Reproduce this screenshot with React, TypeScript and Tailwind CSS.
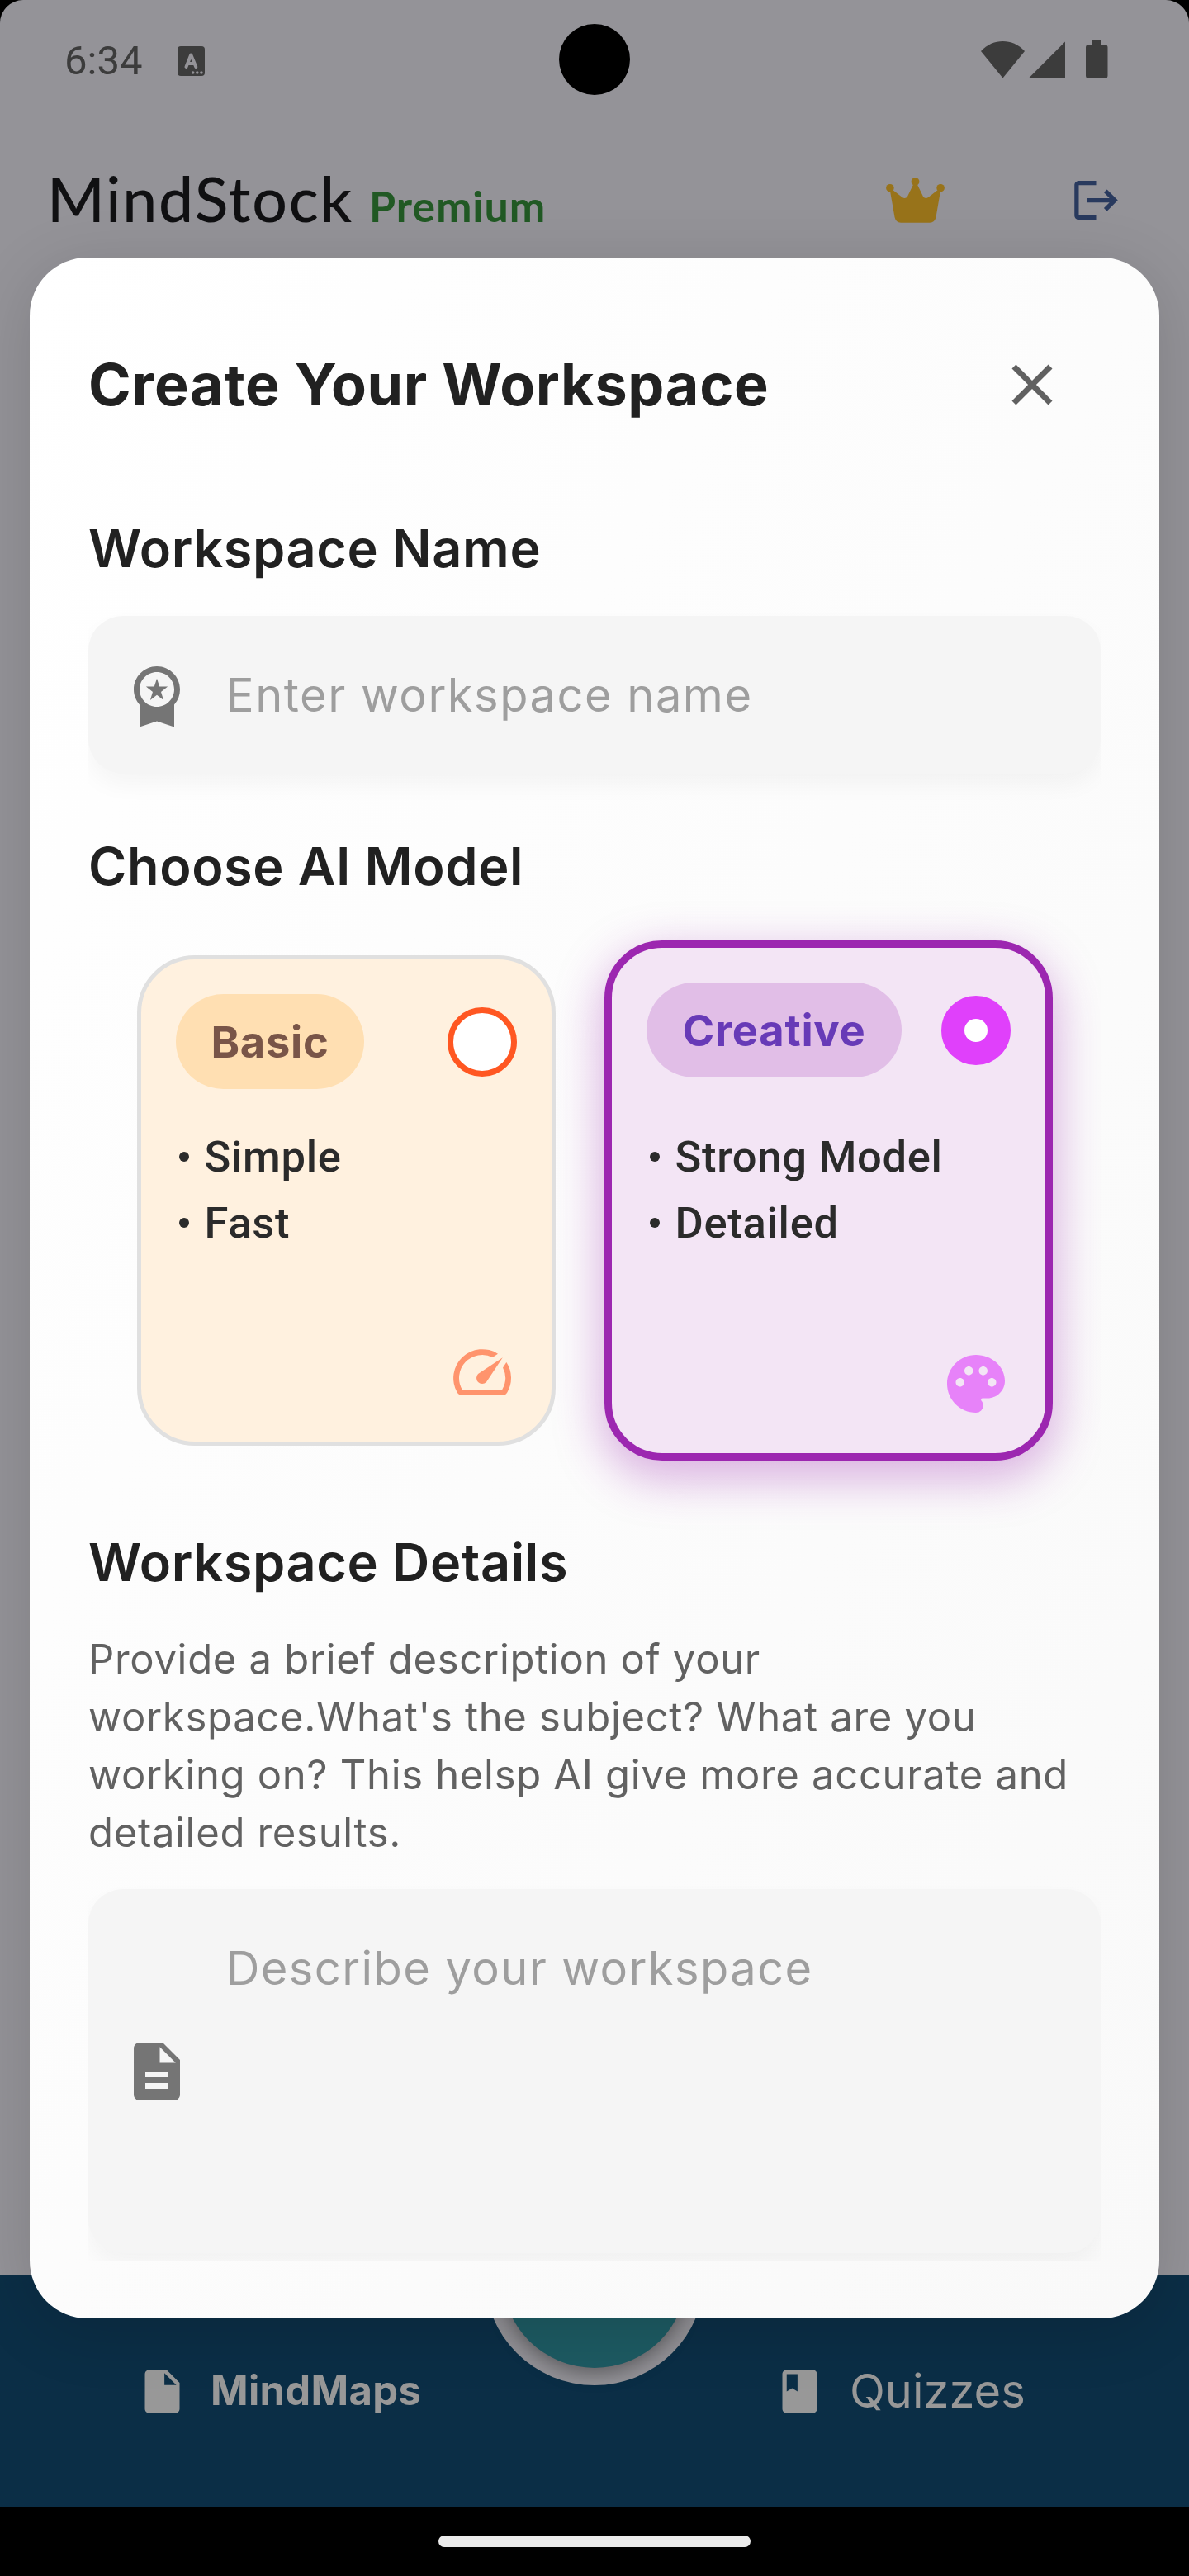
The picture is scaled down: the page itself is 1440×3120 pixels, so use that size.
import React from "react";
import {
  MdWorkspacePremium,
  MdDescription,
  MdSpeed,
  MdLogout,
  MdInsertDriveFile,
  MdBook,
  MdClose,
} from "react-icons/md";

function StatusBar() {
  return (
    <div className="relative flex h-[147px] items-center justify-between pl-[78px] pr-[98px] text-[#3c3c3c]">
      <div className="flex items-center gap-[40px]">
        <span className="w-[97px] whitespace-nowrap font-[Roboto] text-[49px] leading-[56px]">6:34</span>
        <span className="flex h-[36px] w-[33px] items-center justify-center rounded-[4px] bg-[#3c3c3c]">
          <svg viewBox="0 0 33 36" className="h-[36px] w-[33px]" fill="none">
            <path
              d="M10.5 25 L16.3 10.5 L22.3 25 M12.8 21 H20"
              stroke="#949398"
              strokeWidth="4"
              strokeLinecap="round"
              strokeLinejoin="round"
            />
            <circle cx="18.7" cy="32" r="1.8" fill="#949398" />
            <circle cx="23.8" cy="32" r="1.8" fill="#949398" />
            <circle cx="28.9" cy="32" r="1.8" fill="#949398" />
          </svg>
        </span>
      </div>
      <div className="absolute left-[677px] top-[29px] size-[86px] rounded-full bg-black" />
      <svg viewBox="0 0 154 46" className="mt-[-3px] h-[46px] w-[154px]" fill="currentColor">
        <path d="M0 13 C8 4.500 17 1 26.500 1 C36 1 45 4.500 53 13 L26.500 45.500 Z" />
        <path d="M57.500 46 L102 1.500 V46 Z" />
        <path d="M134.500 0 H146 V5 H150 Q153.500 5 153.500 8.500 V42.500 Q153.500 46 150 46 H130.500 Q127 46 127 42.500 V8.500 Q127 5 130.500 5 H134.500 Z" />
      </svg>
    </div>
  );
}

function Header() {
  return (
    <div className="flex h-[190px] items-center justify-between pl-[57px] pr-[81px]">
      <div className="mt-[-5px] flex items-baseline font-[Lato]">
        <span className="w-[390px] whitespace-nowrap text-[75px] font-medium leading-[100px] tracking-[1.800px] text-[#101012]">
          MindStock
        </span>
        <span className="whitespace-nowrap text-[52px] font-bold leading-[70px] tracking-[0.9px] text-[#215924]">
          Premium
        </span>
      </div>
      <div className="flex items-center">
        <svg viewBox="0 0 71 55" className="mr-[152px] h-[55px] w-[71px]" fill="#98731a">
          <circle cx="4.9" cy="12.700" r="4.800" />
          <circle cx="35.500" cy="4.9" r="4.900" />
          <circle cx="66.1" cy="12.700" r="4.800" />
          <path d="M5.200 17.500 L8.500 15.200 L19.800 24 Q23.500 26.500 26 23 L32.800 9 H38.200 L45 23 Q47.500 26.500 51.200 24 L62.500 15.200 L65.800 17.500 L60.500 48 Q59 54.700 53 54.700 H18 Q12 54.700 10.500 48 Z" />
        </svg>
        <MdLogout className="size-[63px] text-[#293a5e]" />
      </div>
    </div>
  );
}

function BottomNav() {
  return (
    <div className="relative flex h-[280px] bg-[#0b2e46] font-[Inter] text-[#989898]">
      <div className="flex h-[280px] w-[720px] items-center gap-[27px] pl-[165px]">
        <MdInsertDriveFile className="size-[63px]" />
        <span className="whitespace-nowrap text-[49px] font-bold tracking-[0.3px]">MindMaps</span>
      </div>
      <div className="flex h-[280px] items-center gap-[29px] pl-[217px]">
        <MdBook className="size-[63px]" />
        <span className="whitespace-nowrap text-[56px]">Quizzes</span>
      </div>
      <div className="absolute left-[587px] top-[-133px] flex size-[266px] items-center justify-center rounded-full bg-[#949398]">
        <div className="size-[224px] rounded-full bg-[#1d5a62] shadow-[0_7px_21px_rgba(0,0,0,0.35)]" />
      </div>
    </div>
  );
}

function SectionTitle({ children }: { children: React.ReactNode }) {
  return (
    <h2 className="whitespace-nowrap text-[63px] font-semibold leading-[76px] tracking-[0.600px] text-[#212121]">
      {children}
    </h2>
  );
}

function Bullets({ items }: { items: string[] }) {
  return (
    <ul className="font-[Roboto] text-[52.5px] font-medium leading-[80px] tracking-[0.7px] text-[#2b2b2b]">
      {items.map((item) => (
        <li key={item} className="flex items-center whitespace-nowrap">
          <span className="ml-[3.500px] mr-[19px] size-[12px] rounded-full bg-[#2b2b2b]" />
          {item}
        </li>
      ))}
    </ul>
  );
}

function PaletteIcon() {
  return (
    <svg viewBox="0 0 24 24" className="size-[84px] self-end" fill="#e040fb" fillOpacity="0.6">
      <path d="M12 2C6.490 2 2 6.490 2 12s4.490 10 10 10a2.500 2.500 0 0 0 2.500-2.500c0-.610-.230-1.200-.640-1.670a.528.528 0 0 1-.130-.330c0-.280.220-.500.500-.500H16c3.310 0 6-2.690 6-6 0-4.960-4.490-9-10-9zm5.500 11c-.830 0-1.500-.670-1.500-1.500s.670-1.500 1.500-1.500 1.500.670 1.500 1.500-.670 1.500-1.500 1.500zm-3-4c-.830 0-1.500-.670-1.500-1.500S13.670 6 14.500 6s1.500.670 1.500 1.500S15.330 9 14.500 9zM5 11.500c0-.830.670-1.500 1.500-1.500s1.500.670 1.500 1.500S7.330 13 6.500 13 5 12.330 5 11.500zm6-4c0 .830-.670 1.500-1.500 1.500S8 8.330 8 7.500 8.670 6 9.500 6s1.500.670 1.500 1.500z" />
    </svg>
  );
}

function ModelCards() {
  return (
    <div className="flex items-center gap-[59px] pl-[59px]">
      <div className="flex h-[594px] w-[507px] flex-col rounded-[70px] border-[5px] border-[#e0e0e0] bg-[#fff1df] p-[42px]">
        <div className="flex items-center justify-between">
          <span className="flex h-[115px] w-[228px] items-center justify-center rounded-full bg-[#ffdfb2] pt-[2px] text-[52.5px] font-bold tracking-[0.7px] text-[#795548]">
            Basic
          </span>
          <span className="size-[84px] rounded-full border-[7px] border-[#ff5722] bg-white" />
        </div>
        <div className="mt-[42px] grow">
          <Bullets items={["Simple", "Fast"]} />
        </div>
        <MdSpeed className="size-[84px] self-end text-[#ff5722]/60" />
      </div>
      <div className="flex h-[630px] w-[543px] flex-col rounded-[70px] border-[9px] border-[#9c27b0] bg-[#f3e5f5] p-[42px] shadow-[0_18px_56px_4px_rgba(156,39,176,0.36)]">
        <div className="flex items-center justify-between">
          <span className="flex h-[115px] w-[309px] items-center justify-center rounded-full bg-[#e1bee7] pt-[2px] text-[52.5px] font-bold tracking-[0.7px] text-[#673ab7]">
            Creative
          </span>
          <span className="size-[84px] rounded-full border-[28px] border-[#e040fb] bg-white" />
        </div>
        <div className="mt-[56px] grow">
          <Bullets items={["Strong Model", "Detailed"]} />
        </div>
        <PaletteIcon />
      </div>
    </div>
  );
}

function Dialog() {
  return (
    <div className="absolute left-[36px] top-[312px] flex h-[2496px] w-[1368px] flex-col rounded-[70px] bg-linear-to-br from-white to-[#f9f9f9] px-[71px] pt-[112px] font-[Inter] shadow-[0_14px_80px_rgba(0,0,0,0.14)]">
      <div className="flex h-[84px] items-center justify-between pr-[41px]">
        <h1 className="whitespace-nowrap text-[70px] font-bold leading-[84px] tracking-[0.7px] text-[#212121]">
          Create Your Workspace
        </h1>
        <MdClose className="size-[84px] text-[#616161]" />
      </div>
      <div className="mt-[118px] h-[2112px] overflow-hidden">
        <SectionTitle>Workspace Name</SectionTitle>
        <div className="mt-[44px] flex h-[191px] items-center gap-[42px] rounded-[42px] bg-[#f5f5f5] pl-[41px] shadow-[0_14px_28px_rgba(0,0,0,0.04)]">
          <MdWorkspacePremium className="size-[84px] text-[#757575]" />
          <span className="whitespace-nowrap text-[56px] leading-[68px] tracking-[1.500px] text-[#9e9e9e]">
            Enter workspace name
          </span>
        </div>
        <div className="mt-[74px]">
          <SectionTitle>Choose AI Model</SectionTitle>
        </div>
        <div className="mt-[52px]">
          <ModelCards />
        </div>
        <div className="mt-[85px]">
          <SectionTitle>Workspace Details</SectionTitle>
        </div>
        <p className="mt-[45px] whitespace-nowrap text-[49px] leading-[70px] tracking-[0.680px] text-[#616161]">
          Provide a brief description of your
          <br />
          workspace.What's the subject? What are you
          <br />
          working on? This helsp AI give more accurate and
          <br />
          detailed results.
        </p>
        <div className="mt-[33px] flex h-[441px] items-center gap-[42px] rounded-[42px] bg-[#f5f5f5] pl-[41px] shadow-[0_14px_28px_rgba(0,0,0,0.04)]">
          <MdDescription className="size-[84px] text-[#757575]" />
          <span className="mb-[249px] whitespace-nowrap text-[56px] leading-[68px] tracking-[1.400px] text-[#9e9e9e]">
            Describe your workspace
          </span>
        </div>
      </div>
    </div>
  );
}

export default function App() {
  return (
    <div className="h-[3120px] w-[1440px] overflow-hidden bg-black">
      <div className="relative flex h-[3120px] flex-col">
        <div className="h-[2756px] rounded-t-[28px] bg-[#949398]">
          <StatusBar />
          <Header />
        </div>
        <BottomNav />
        <div className="flex h-[84px] items-center justify-center bg-black">
          <div className="h-[14px] w-[378px] rounded-full bg-[#ebebeb]" />
        </div>
        <Dialog />
      </div>
    </div>
  );
}
